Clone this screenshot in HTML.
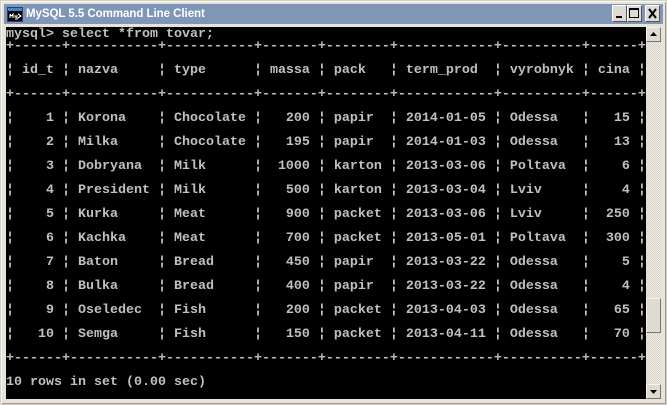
<!DOCTYPE html>
<html><head><meta charset="utf-8">
<style>
html,body{margin:0;padding:0;background:#d4d0c8;}
body{width:667px;height:405px;overflow:hidden;position:relative;}
div{position:absolute;box-sizing:border-box;}
#frame{left:0;top:0;width:667px;height:405px;background:#e6e3d9;border:1px solid #d4d0c8;box-shadow:inset 1px 1px 0 #f8f7f2,inset -1px -1px 0 #a09d94;}
#title{left:4px;top:4px;width:659px;height:20px;background:#7f96b8;}
#ttext{left:26px;top:5px;font:bold 11.5px/18px "Liberation Sans",sans-serif;color:#fff;white-space:nowrap;letter-spacing:-.04px;}
.wb{top:5px;width:15px;height:17px;background:#dedbd2;border:1px solid;border-color:#fff #555 #555 #fff;}
#term{left:6px;top:27px;width:640px;height:372px;background:#000;overflow:hidden;}
pre{margin:0;position:absolute;left:0;top:0;font:bold 13.333px/12px "Liberation Mono",monospace;color:#c0c0c0;white-space:pre;}
#track{left:646px;top:27px;width:15px;height:372px;background-color:#f1efe8;background-image:linear-gradient(45deg,#d4d0c8 25%,transparent 25%,transparent 75%,#d4d0c8 75%),linear-gradient(45deg,#d4d0c8 25%,transparent 25%,transparent 75%,#d4d0c8 75%);background-size:2px 2px;background-position:0 0,1px 1px;}
.sb{left:646px;width:15px;background:#dedbd2;border:1px solid;border-color:#f4f3ee #77756f #77756f #f4f3ee;}
</style></head><body>
<div id="frame"></div>
<div id="title"></div>
<svg style="position:absolute;left:7px;top:7px" width="16" height="15" viewBox="0 0 16 15">
<rect x="0" y="0" width="16" height="15" fill="#2a3f66"/>
<rect x="1" y="1" width="14" height="3" fill="#3f86d8"/>
<rect x="1" y="4" width="14" height="10" fill="#000"/>
<path d="M3 11V7M3 7L4.5 9L6 7V11M8 8V10H10M10 8V12H8M11 7L14 9L11 11" stroke="#fff" stroke-width="1" fill="none" shape-rendering="crispEdges"/>
</svg>
<div id="ttext">MySQL 5.5 Command Line Client</div>
<div class="wb" style="left:612px"><svg style="position:absolute;left:0;top:0" width="13" height="15"><rect x="3" y="10" width="6" height="2" fill="#000"/></svg></div>
<div class="wb" style="left:627px"><svg style="position:absolute;left:0;top:0" width="13" height="15"><rect x="1.5" y="2.5" width="9" height="9" fill="none" stroke="#000"/><rect x="1" y="2" width="10" height="2" fill="#000"/></svg></div>
<div class="wb" style="left:645px"><svg style="position:absolute;left:0;top:0" width="13" height="15"><path d="M3 3L10 12M10 3L3 12" stroke="#000" stroke-width="2" fill="none"/></svg></div>
<div id="term"><pre style="top:2px">mysql&gt; select *from tovar;
+------+-----------+-----------+-------+--------+------------+----------+------+

¦ id_t ¦ nazva     ¦ type      ¦ massa ¦ pack   ¦ term_prod  ¦ vyrobnyk ¦ cina ¦

+------+-----------+-----------+-------+--------+------------+----------+------+

¦    1 ¦ Korona    ¦ Chocolate ¦   200 ¦ papir  ¦ 2014-01-05 ¦ Odessa   ¦   15 ¦

¦    2 ¦ Milka     ¦ Chocolate ¦   195 ¦ papir  ¦ 2014-01-03 ¦ Odessa   ¦   13 ¦

¦    3 ¦ Dobryana  ¦ Milk      ¦  1000 ¦ karton ¦ 2013-03-06 ¦ Poltava  ¦    6 ¦

¦    4 ¦ President ¦ Milk      ¦   500 ¦ karton ¦ 2013-03-04 ¦ Lviv     ¦    4 ¦

¦    5 ¦ Kurka     ¦ Meat      ¦   900 ¦ packet ¦ 2013-03-06 ¦ Lviv     ¦  250 ¦

¦    6 ¦ Kachka    ¦ Meat      ¦   700 ¦ packet ¦ 2013-05-01 ¦ Poltava  ¦  300 ¦

¦    7 ¦ Baton     ¦ Bread     ¦   450 ¦ papir  ¦ 2013-03-22 ¦ Odessa   ¦    5 ¦

¦    8 ¦ Bulka     ¦ Bread     ¦   400 ¦ papir  ¦ 2013-03-22 ¦ Odessa   ¦    4 ¦

¦    9 ¦ Oseledec  ¦ Fish      ¦   200 ¦ packet ¦ 2013-04-03 ¦ Odessa   ¦   65 ¦

¦   10 ¦ Semga     ¦ Fish      ¦   150 ¦ packet ¦ 2013-04-11 ¦ Odessa   ¦   70 ¦

+------+-----------+-----------+-------+--------+------------+----------+------+

10 rows in set (0.00 sec)</pre></div>
<div id="track"></div>
<div class="sb" style="top:27px;height:15px"><svg style="position:absolute;left:0;top:0" width="13" height="13"><path d="M6.5 4L10 8H3Z" fill="#000"/></svg></div>
<div class="sb" style="top:298px;height:35px"></div>
<div class="sb" style="top:384px;height:15px"><svg style="position:absolute;left:0;top:0" width="13" height="13"><path d="M3 5H10L6.5 9Z" fill="#000"/></svg></div>
</body></html>
